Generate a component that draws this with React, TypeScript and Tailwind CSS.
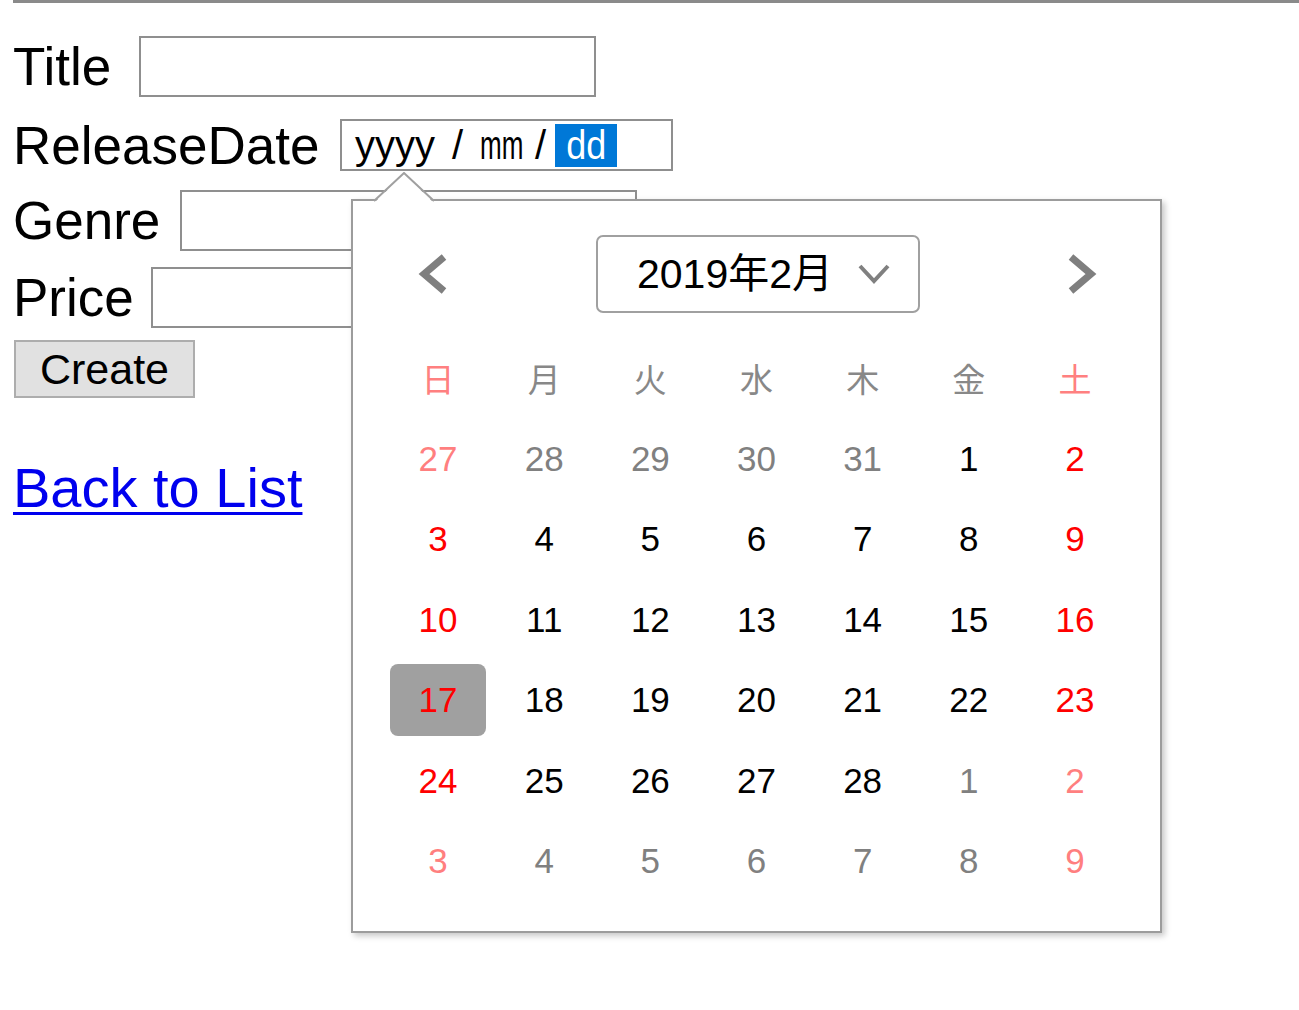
import React from 'react';

const FONT = '"Liberation Sans", "Noto Sans CJK JP", sans-serif';

type Day = { n: number; other: boolean };

const WEEKDAYS = ['日', '月', '火', '水', '木', '金', '土'];

const WEEKS: Day[][] = [
  [27, 28, 29, 30, 31].map((n) => ({ n, other: true })).concat([1, 2].map((n) => ({ n, other: false }))),
  [3, 4, 5, 6, 7, 8, 9].map((n) => ({ n, other: false })),
  [10, 11, 12, 13, 14, 15, 16].map((n) => ({ n, other: false })),
  [17, 18, 19, 20, 21, 22, 23].map((n) => ({ n, other: false })),
  [24, 25, 26, 27, 28].map((n) => ({ n, other: false })).concat([1, 2].map((n) => ({ n, other: true }))),
  [3, 4, 5, 6, 7, 8, 9].map((n) => ({ n, other: true })),
];

function dayColor(col: number, other: boolean) {
  const weekend = col === 0 || col === 6;
  if (other) return weekend ? 'text-[#ff7f7f]' : 'text-[#808080]';
  return weekend ? 'text-[#ff0000]' : 'text-black';
}

function Chevron({ dir }: { dir: 'left' | 'right' }) {
  return (
    <svg width="32" height="42" viewBox="0 0 32 42" fill="none">
      <polyline
        points={dir === 'left' ? '27,4 7,21 27,38' : '5,4 25,21 5,38'}
        stroke="#7f7f7f"
        strokeWidth="7"
        strokeLinejoin="miter"
      />
    </svg>
  );
}

function DatePicker() {
  return (
    <div className="absolute left-[351px] top-[199px] z-10 h-[734px] w-[811px] border-2 border-[#9c9c9c] bg-white px-[32px] pt-[34px] shadow-[3px_3px_6px_rgba(0,0,0,0.22)]">
      {/* pointer towards the input */}
      <svg className="absolute -top-[29px] left-[20px]" width="62" height="32" viewBox="0 0 62 32">
        <polygon points="1,31 31,2 61,31" fill="white" />
        <polyline points="1,29 31,1 61,29" fill="none" stroke="#a0a0a0" strokeWidth="2" />
      </svg>

      <div className="flex h-[78px] items-center justify-between">
        <button className="flex w-[95px] items-center justify-center">
          <Chevron dir="left" />
        </button>
        <div className="flex h-[78px] w-[324px] items-center rounded-[7px] border-2 border-[#a0a0a0] pl-[39px] pr-[28px]">
          <span className="text-[41px] leading-none text-black">2019年2月</span>
          <svg className="ml-auto" width="32" height="20" viewBox="0 0 32 20" fill="none">
            <polyline points="2,2 16,17 30,2" stroke="#808080" strokeWidth="4" />
          </svg>
        </div>
        <button className="flex w-[92px] items-center justify-center">
          <Chevron dir="right" />
        </button>
      </div>

      <div className="mt-[25px] grid grid-cols-7">
        {WEEKDAYS.map((w, i) => (
          <div
            key={w}
            className={`flex h-[80.5px] items-center justify-center text-[33px] ${
              i === 0 || i === 6 ? 'text-[#ff8080]' : 'text-[#888]'
            }`}
            style={{ fontFamily: '"Noto Sans CJK JP", sans-serif' }}
          >
            {w}
          </div>
        ))}
        {WEEKS.map((week, r) =>
          week.map((d, c) => {
            const selected = r === 3 && c === 0;
            return (
              <div key={`${r}-${c}`} className="flex h-[80.5px] items-center justify-center">
                <div
                  className={`flex h-[72px] w-[96px] items-center justify-center rounded-lg text-[35px] ${dayColor(
                    c,
                    d.other
                  )} ${selected ? 'bg-[#a0a0a0]' : ''}`}
                >
                  {d.n}
                </div>
              </div>
            );
          })
        )}
      </div>
    </div>
  );
}

function TextRow({ label, labelWidth, inputWidth, className }: { label: string; labelWidth: number; inputWidth: string; className: string }) {
  return (
    <div className={`flex h-[61px] items-center ${className}`}>
      <span className="shrink-0 text-[53px] leading-[53px]" style={{ width: labelWidth }}>
        {label}
      </span>
      <div className={`h-[61px] ${inputWidth} border-2 border-[#8f8f8f] bg-white`} />
    </div>
  );
}

export default function App() {
  return (
    <div className="relative min-h-[1010px] bg-white text-black" style={{ fontFamily: FONT }}>
      <div className="ml-[13px] h-[3px] bg-[#8a8a8a]" />
      <div className="pl-[13px]">
        <TextRow label="Title" labelWidth={126} inputWidth="w-[457px]" className="mt-[33px]" />

        <div className="mt-[22px] flex h-[52px] items-center">
          <span className="w-[327px] shrink-0 text-[53px] leading-[53px]">ReleaseDate</span>
          <div className="flex h-[52px] w-[333px] items-center border-2 border-[#8f8f8f] pl-[13px] text-[40px] leading-none">
            <span className="w-[97px]">yyyy</span>
            <span className="w-[28px]">/</span>
            <span className="w-[55px]">
              <span className="inline-block origin-left scale-x-[0.65]">mm</span>
            </span>
            <span className="w-[20px]">/</span>
            <span className="flex h-[43px] w-[62px] items-center justify-center bg-[#0078d7] text-white">
              <span className="inline-block scale-x-[0.9]">dd</span>
            </span>
          </div>
        </div>

        <TextRow label="Genre" labelWidth={167} inputWidth="w-[457px]" className="mt-[19px]" />
        <TextRow label="Price" labelWidth={138} inputWidth="w-[457px]" className="mt-[16px]" />

        <button className="ml-px mt-[12px] flex h-[58px] w-[181px] items-center justify-center border-2 border-[#adadad] bg-[#e1e1e1] text-[43px] leading-none">
          Create
        </button>

        <a
          href="#"
          className="mt-[62px] block w-max text-[56px] leading-[56px] text-[#0000ee] underline decoration-[3px] underline-offset-[5px]"
        >
          Back to List
        </a>
      </div>

      <DatePicker />
    </div>
  );
}
